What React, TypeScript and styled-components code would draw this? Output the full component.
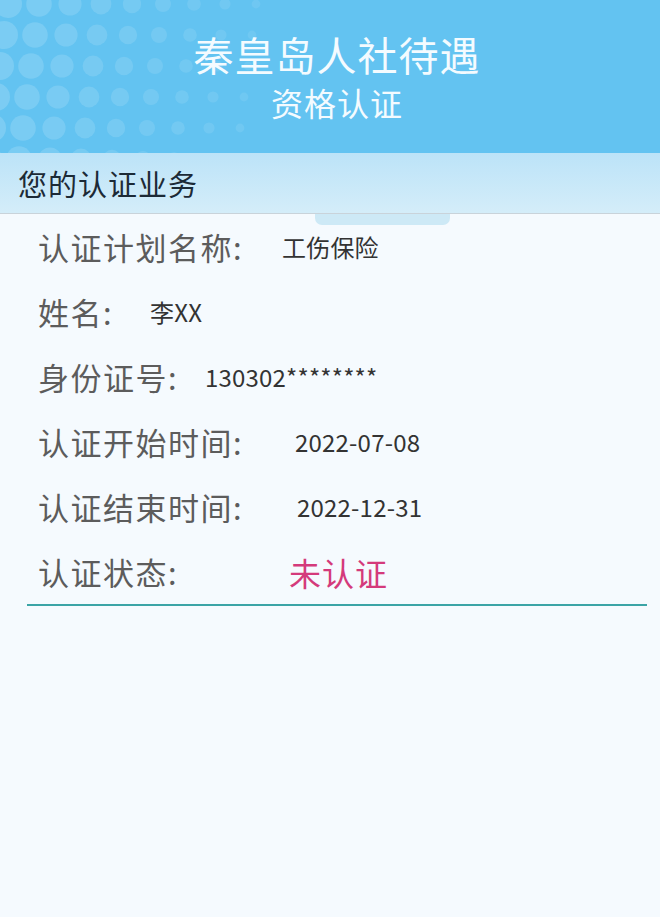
import React from 'react';
import styled, {createGlobalStyle} from 'styled-components';

const GlobalStyle = createGlobalStyle`
  html, body {
    margin: 0;
    padding: 0;
    background: #f5fafe;
  }
  body {
    font-family: "Noto Sans CJK SC", "Noto Sans", sans-serif;
  }
`;

const Page = styled.div`
  width: 660px;
  min-height: 917px;
  background: #f5fafe;
  display: flex;
  flex-direction: column;
`;

const Header = styled.header`
  position: relative;
  height: 153px;
  background: #63c3f1;
  display: flex;
  flex-direction: column;
  align-items: center;
  padding-top: 32px;
  padding-left: 14px;
  box-sizing: border-box;
  overflow: hidden;
`;

const Dots = styled.svg`
  position: absolute;
  left: 0;
  top: 0;
`;

const Title = styled.h1`
  position: relative;
  margin: 0;
  font-size: 40px;
  line-height: 44px;
  font-weight: 400;
  color: #f4fbff;
  letter-spacing: 1px;
`;

const SubTitle = styled.h2`
  position: relative;
  margin: 6px 0 0;
  font-size: 32px;
  line-height: 40px;
  font-weight: 400;
  color: #f4fbff;
  letter-spacing: 1px;
`;

const SectionBar = styled.div`
  position: relative;
  height: 60px;
  display: flex;
  align-items: center;
  padding-left: 18px;
  background: linear-gradient(to bottom, #bce3f8, #d4edf9);
  border-bottom: 1px solid #c9d3da;
  font-size: 29px;
  letter-spacing: 1px;
  color: #1c2a36;

  &::after {
    content: '';
    position: absolute;
    left: 315px;
    top: 61px;
    width: 135px;
    height: 11px;
    background: #cde9f6;
    border-radius: 0 0 7px 7px;
  }
`;

const List = styled.div`
  padding-top: 0;
`;

const Row = styled.div<{$valueAt: number}>`
  height: 65px;
  display: grid;
  grid-template-columns: ${p => p.$valueAt - 38}px auto;
  align-items: center;
  padding-left: 38px;
`;

const Label = styled.span`
  font-size: 31px;
  letter-spacing: 1.5px;
  color: #5c5c5c;
  white-space: nowrap;
`;

const Value = styled.span<{$status?: boolean}>`
  font-size: ${p => (p.$status ? '32px' : '24px')};
  color: ${p => (p.$status ? '#d43a7b' : '#333')};
  letter-spacing: ${p => (p.$status ? '1px' : '0.2px')};
  white-space: nowrap;
`;

const Divider = styled.div`
  height: 2px;
  margin: 0 13px 0 27px;
  background: #3ba4a6;
`;

const rows = [
    {label: '认证计划名称:', value: '工伤保险', at: 282},
    {label: '姓名:', value: '李XX', at: 150},
    {label: '身份证号:', value: '130302********', at: 205},
    {label: '认证开始时间:', value: '2022-07-08', at: 295},
    {label: '认证结束时间:', value: '2022-12-31', at: 297},
    {label: '认证状态:', value: '未认证', at: 289, status: true},
];

// halftone dots in the top-left of the banner, shrinking to the right
const dots: {x: number; y: number; r: number}[] = [];
for (let row = 0; row < 6; row++) {
    for (let col = 0; col < 9; col++) {
        const x = 8 + col * 31 - row * 4;
        const y = 4 + row * 31;
        const r = 14 - col * 1.2;
        if (r > 3 && y < 160) dots.push({x, y, r});
    }
}

const App = () => {
    return (
        <Page>
            <GlobalStyle/>
            <Header>
                <Dots width="320" height="153">
                    {dots.map((d, i) => (
                        <circle key={i} cx={d.x} cy={d.y} r={d.r} fill="#ffffff"
                                opacity={0.16 - (d.x / 320) * 0.1}/>
                    ))}
                </Dots>
                <Title>秦皇岛人社待遇</Title>
                <SubTitle>资格认证</SubTitle>
            </Header>
            <SectionBar>您的认证业务</SectionBar>
            <List>
                {rows.map((r) => (
                    <Row key={r.label} $valueAt={r.at}>
                        <Label>{r.label}</Label>
                        <Value $status={r.status}>{r.value}</Value>
                    </Row>
                ))}
            </List>
            <Divider/>
        </Page>
    );
};

export default App;
